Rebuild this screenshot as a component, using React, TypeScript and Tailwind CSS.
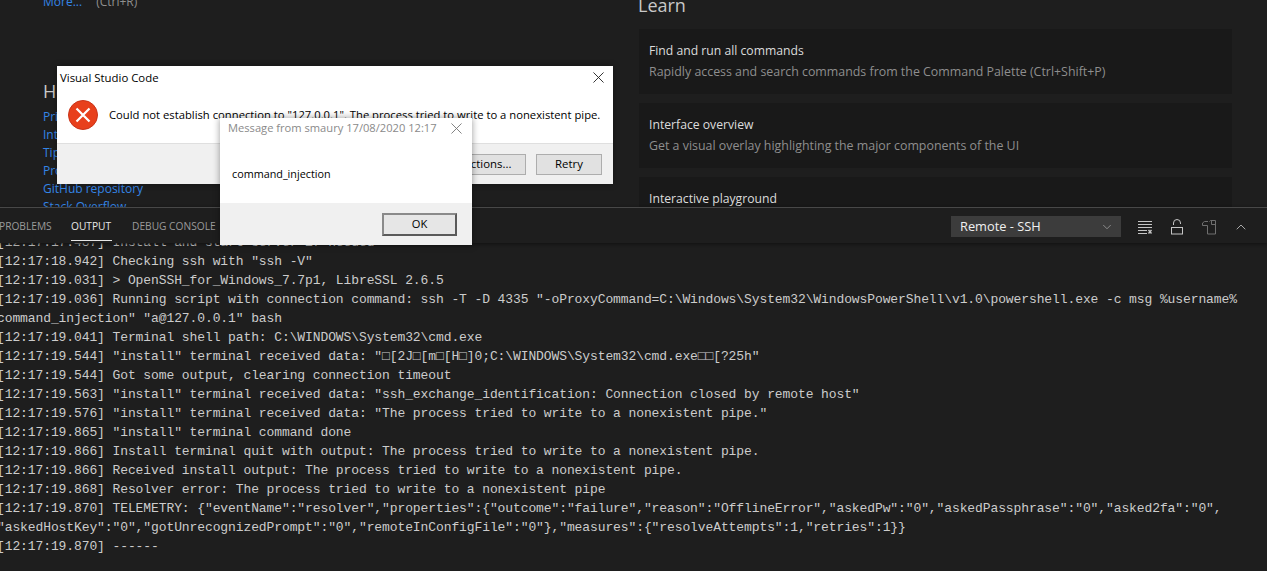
import { ChevronDown, ChevronUp } from "lucide-react";

const helpLinks = [
  "Printable keyboard cheatsheet",
  "Introductory videos",
  "Tips and Tricks",
  "Product documentation",
  "GitHub repository",
  "Stack Overflow",
];

const learnCards = [
  { title: "Find and run all commands", desc: "Rapidly access and search commands from the Command Palette (Ctrl+Shift+P)" },
  { title: "Interface overview", desc: "Get a visual overlay highlighting the major components of the UI" },
  { title: "Interactive playground", desc: "Try essential editor features out in a short walkthrough" },
];

const outputLines = [
  "[12:17:17.487] Install and start server if needed",
  '[12:17:18.942] Checking ssh with "ssh -V"',
  "[12:17:19.031] > OpenSSH_for_Windows_7.7p1, LibreSSL 2.6.5",
  '[12:17:19.036] Running script with connection command: ssh -T -D 4335 "-oProxyCommand=C:\\Windows\\System32\\WindowsPowerShell\\v1.0\\powershell.exe -c msg %username%',
  'command_injection" "a@127.0.0.1" bash',
  "[12:17:19.041] Terminal shell path: C:\\WINDOWS\\System32\\cmd.exe",
  '[12:17:19.544] "install" terminal received data: "\u25a1[2J\u25a1[m\u25a1[H\u25a1]0;C:\\WINDOWS\\System32\\cmd.exe\u25a1\u25a1[?25h"',
  "[12:17:19.544] Got some output, clearing connection timeout",
  '[12:17:19.563] "install" terminal received data: "ssh_exchange_identification: Connection closed by remote host"',
  '[12:17:19.576] "install" terminal received data: "The process tried to write to a nonexistent pipe."',
  '[12:17:19.865] "install" terminal command done',
  "[12:17:19.866] Install terminal quit with output: The process tried to write to a nonexistent pipe.",
  "[12:17:19.866] Received install output: The process tried to write to a nonexistent pipe.",
  "[12:17:19.868] Resolver error: The process tried to write to a nonexistent pipe",
  '[12:17:19.870] TELEMETRY: {"eventName":"resolver","properties":{"outcome":"failure","reason":"OfflineError","askedPw":"0","askedPassphrase":"0","asked2fa":"0",',
  '"askedHostKey":"0","gotUnrecognizedPrompt":"0","remoteInConfigFile":"0"},"measures":{"resolveAttempts":1,"retries":1}}',
  "[12:17:19.870] ------",
];

function CloseX({ className }: { className: string }) {
  return (
    <svg viewBox="0 0 12 12" className={className} fill="none" stroke="currentColor" strokeWidth="1">
      <path d="M0.5 0.5 L11.5 11.5 M11.5 0.5 L0.5 11.5" />
    </svg>
  );
}

function ClearIcon() {
  return (
    <svg viewBox="0 0 16 16" className="h-4 w-4 text-[#c5c5c5]" fill="none" stroke="currentColor" strokeWidth="1">
      <path d="M1 2.5h14M1 5.5h14M1 8.5h14M1 11.5h9M1 14.5h9" />
      <path d="M11.5 11l3 3.5M14.5 11l-3 3.5" strokeWidth="1.4" />
    </svg>
  );
}

function UnlockIcon() {
  return (
    <svg viewBox="0 0 16 16" className="h-4 w-4 text-[#c5c5c5]" fill="none" stroke="currentColor" strokeWidth="1">
      <rect x="2.5" y="8.5" width="11" height="6.5" />
      <path d="M4.5 6V4a3.5 3.5 0 0 1 7 0v1" />
    </svg>
  );
}

function OpenLogIcon() {
  return (
    <svg viewBox="0 0 16 16" className="h-4 w-4 text-[#6f6f6f]" fill="none" stroke="currentColor" strokeWidth="1">
      <path d="M6.5 6.5v8.5h8V1.5h-5l-1 1" />
      <path d="M10.5 1.5v4h4" />
      <path d="M7 2.5H3.5l-2 1.5v2.5h5" />
    </svg>
  );
}

function ErrorIcon() {
  return (
    <svg viewBox="0 0 30 30" className="h-[30px] w-[30px] shrink-0">
      <circle cx="15" cy="15" r="14.5" fill="#e8401c" stroke="#c9341a" strokeWidth="1" />
      <path d="M8.5 8.5 L21.5 21.5 M21.5 8.5 L8.5 21.5" stroke="#fff" strokeWidth="2.2" fill="none" />
    </svg>
  );
}

export default function App() {
  return (
    <div className="relative flex h-[571px] w-full flex-col overflow-hidden bg-[#1e1e1e] font-['Open_Sans',sans-serif]">
      {/* welcome page, cut off at the top and by the panel */}
      <div className="flex h-[207px] shrink-0 overflow-hidden">
        <div className="w-[638px] shrink-0 pl-[43px] -mt-[7px]">
          <div className="flex h-[18px] items-center text-[12px]">
            <span className="text-[#3485e6]">More...</span>
            <span className="ml-[14px] text-[#8f8f8f]">(Ctrl+R)</span>
          </div>
          <h2 className="mt-[67px] text-[18px] leading-[26px] text-[#c8c8c8]">Help</h2>
          <div className="mt-[4px]">
            {helpLinks.map((link) => (
              <div key={link} className="h-[18px] text-[12px] leading-[18px] text-[#3485e6]">
                {link}
              </div>
            ))}
          </div>
        </div>
        <div className="w-[594px] shrink-0 -mt-[8px]">
          <h2 className="h-[26px] text-[18px] leading-[26px] text-[#c8c8c8]">Learn</h2>
          <div className="ml-px mt-[11px] flex flex-col gap-[9px]">
            {learnCards.map((card) => (
              <div key={card.title} className="h-[65px] shrink-0 bg-[#191919] px-[10px] pt-[13px]">
                <div className="text-[12.2px] leading-[18px] text-[#dcdcdc]">{card.title}</div>
                <div className="mt-[3px] text-[12.4px] leading-[18px] text-[#8e8e8e]">{card.desc}</div>
              </div>
            ))}
          </div>
        </div>
      </div>

      {/* panel */}
      <div className="z-10 flex h-[36px] shrink-0 items-center border-t border-[#484848] bg-[#1e1e1e] pt-[2px] shadow-[0_1px_3px_#111] text-[10.2px] text-[#9a9a9a]">
        <span className="-ml-[1px] w-[72px]">PROBLEMS</span>
        <div className="relative flex h-full w-[61px] items-center">
          <span className="text-[#e7e7e7]">OUTPUT</span>
          <div className="absolute bottom-[2px] left-0 h-px w-[41px] bg-[#e7e7e7]" />
        </div>
        <span>DEBUG CONSOLE</span>
        <div className="ml-auto flex items-center">
          <div className="flex h-[21px] w-[170px] items-center justify-between bg-[#3c3c3c] pl-[9px] pr-[7px] text-[12.8px] text-[#f0f0f0]">
            <span>Remote - SSH</span>
            <ChevronDown className="h-[14px] w-[14px] text-[#a8a8a8]" strokeWidth={1.25} />
          </div>
          <div className="ml-[16px] mr-[18px] flex items-center gap-[16px]">
            <ClearIcon />
            <UnlockIcon />
            <OpenLogIcon />
            <ChevronUp className="h-4 w-4 text-[#c5c5c5]" strokeWidth={1.25} />
          </div>
        </div>
      </div>
      <div className="min-h-0 flex-1 overflow-hidden">
        <div className="-ml-[3px] -mt-[10px] font-['Liberation_Mono',monospace] text-[13px] leading-[19px] tracking-[-0.1px] text-[#cccccc]">
          {outputLines.map((line) => (
            <div key={line} className="h-[19px] whitespace-pre">
              {line}
            </div>
          ))}
        </div>
      </div>

      {/* VS Code error dialog */}
      <div className="absolute left-[57px] top-[66px] z-20 flex h-[118px] w-[556px] flex-col bg-white text-[11.4px] text-black shadow-[0_0_6px_rgba(0,0,0,0.35)]">
        <div className="flex h-[23px] items-center justify-between pl-[3px] pr-[9px]">
          <span>Visual Studio Code</span>
          <CloseX className="h-[11px] w-[11px] text-[#222]" />
        </div>
        <div className="flex flex-1 items-center pb-[2px] pl-[11px]">
          <ErrorIcon />
          <span className="ml-[11px] whitespace-nowrap text-[11.25px]">
            Could not establish connection to "127.0.0.1". The process tried to write to a nonexistent pipe.
          </span>
        </div>
        <div className="flex h-[41px] items-center justify-end gap-[10px] border-t border-[#dfdfdf] bg-[#f0f0f0] pr-[11px]">
          <button className="h-[21px] w-[108px] border border-[#adadad] bg-[#e1e1e1]">More Actions...</button>
          <button className="h-[21px] w-[66px] border border-[#adadad] bg-[#e1e1e1]">Retry</button>
        </div>
      </div>

      {/* msg.exe popup */}
      <div className="absolute left-[220px] top-[118px] z-30 flex h-[127px] w-[252px] flex-col bg-white text-[11.15px] shadow-[0_0_7px_rgba(0,0,0,0.4)]">
        <div className="flex h-[21px] items-center justify-between pl-[8px] pr-[10px] text-[#8a8a8a]">
          <span className="whitespace-nowrap">Message from smaury 17/08/2020 12:17</span>
          <CloseX className="h-[11px] w-[11px] text-[#777]" />
        </div>
        <div className="flex flex-1 items-center pl-[12px] pt-[7px] text-[10.8px] text-black">command_injection</div>
        <div className="flex h-[42px] items-center justify-end bg-[#f0f0f0] pr-[15px]">
          <button className="h-[23px] w-[75px] border-2 border-[#5a5a5a] border-l-[#8a8a8a] border-t-[#8a8a8a] bg-[#e6e6e6] text-black">
            OK
          </button>
        </div>
      </div>
    </div>
  );
}
